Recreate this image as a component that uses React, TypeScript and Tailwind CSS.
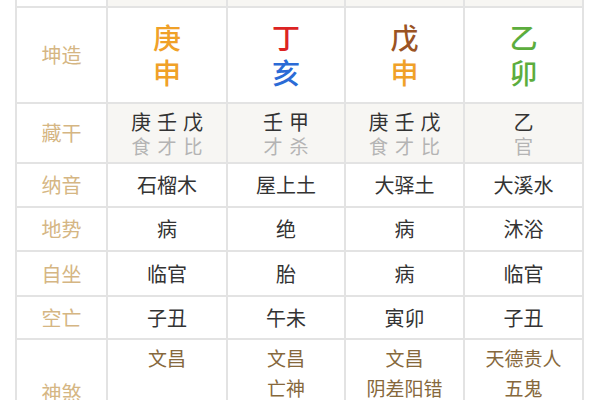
import React from "react";

const font = { fontFamily: '"Noto Sans CJK SC", "Noto Sans", sans-serif' };

const Label = ({ t, bg = "bg-white" }: { t: string; bg?: string }) => (
  <div className={`${bg} flex items-center justify-center text-[20px] text-[#d5b683]`}>{t}</div>
);

const Cell = ({ children, bg = "bg-white" }: { children?: React.ReactNode; bg?: string }) => (
  <div className={`${bg} flex items-center justify-center text-[20px] text-[#333333]`}>{children}</div>
);

export default function App() {
  const pillars = [
    { s: "庚", sc: "text-[#f0a128]", b: "申", bc: "text-[#f0a128]" },
    { s: "丁", sc: "text-[#dc2323]", b: "亥", bc: "text-[#2b6bd6]" },
    { s: "戊", sc: "text-[#9a5324]", b: "申", bc: "text-[#f0a128]" },
    { s: "乙", sc: "text-[#5cad3d]", b: "卯", bc: "text-[#5cad3d]" },
  ];
  const cang = [
    { m: "庚壬戊", s: "食才比" },
    { m: "壬甲", s: "才杀" },
    { m: "庚壬戊", s: "食才比" },
    { m: "乙", s: "官" },
  ];
  const rows: [string, string[]][] = [
    ["纳音", ["石榴木", "屋上土", "大驿土", "大溪水"]],
    ["地势", ["病", "绝", "病", "沐浴"]],
    ["自坐", ["临官", "胎", "病", "临官"]],
    ["空亡", ["子丑", "午未", "寅卯", "子丑"]],
  ];
  const shensha = [["文昌"], ["文昌", "亡神"], ["文昌", "阴差阳错"], ["天德贵人", "五鬼"]];
  return (
    <div className="w-[600px] h-[400px] overflow-hidden bg-white" style={font}>
      <div className="ml-[15px] w-[569px] px-[2px] bg-[#e3e3e3] grid grid-cols-[89px_118px_116px_117px_117px] grid-rows-[6px_94px_58px_42px_42px_43px_41px_106px] gap-[2px]">
        <div className="bg-white" />
        <div className="bg-[#f7f6f3]" />
        <div className="bg-[#f7f6f3]" />
        <div className="bg-[#f7f6f3]" />
        <div className="bg-[#f7f6f3]" />

        <Label t="坤造" />
        {pillars.map((p, i) => (
          <div key={i} className="bg-white flex flex-col items-center justify-center text-[28px] font-medium leading-[35px] pb-[1px]">
            <span className={p.sc}>{p.s}</span>
            <span className={p.bc}>{p.b}</span>
          </div>
        ))}

        <Label t="藏干" />
        {cang.map((c, i) => (
          <div key={i} className="bg-[#f7f6f3] flex flex-col items-center justify-center leading-[24px] pt-[2px]">
            <span className="text-[20px] text-[#333333] tracking-[6px] pl-[6px]">{c.m}</span>
            <span className="text-[19px] text-[#b4b4b4] tracking-[7px] pl-[7px]">{c.s}</span>
          </div>
        ))}

        {rows.map(([l, vals]) => (
          <React.Fragment key={l}>
            <Label t={l} />
            {vals.map((v, i) => (
              <Cell key={i}>{v}</Cell>
            ))}
          </React.Fragment>
        ))}

        <Label t="神煞" />
        {shensha.map((s, i) => (
          <div key={i} className="bg-white flex flex-col items-center pt-[3px] text-[19px] leading-[30px] text-[#86683c]">
            {s.map((x) => (
              <span key={x}>{x}</span>
            ))}
          </div>
        ))}
      </div>
    </div>
  );
}
